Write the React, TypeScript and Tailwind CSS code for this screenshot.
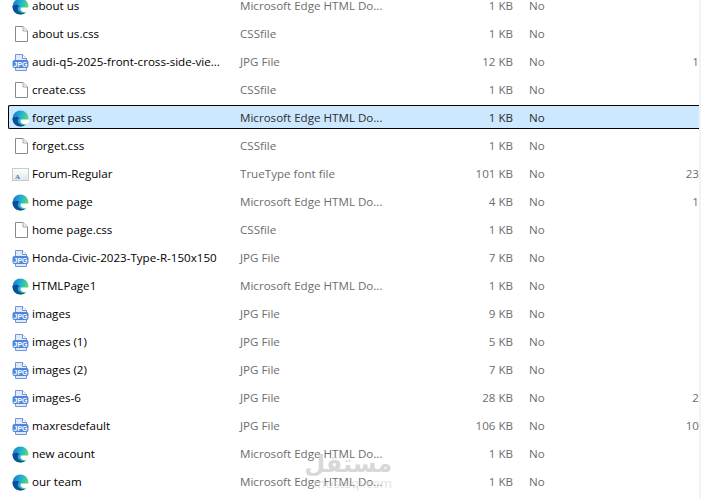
import React from 'react';

type FileKind = 'edge' | 'css' | 'jpg' | 'font';

type FileRow = {
  name: string;
  kind: FileKind;
  type: string;
  size: string;
  extra?: string;
  selected?: boolean;
};

const EDGE_DOC = 'Microsoft Edge HTML Do...';

const files: FileRow[] = [
  { name: 'about us', kind: 'edge', type: EDGE_DOC, size: '1 KB' },
  { name: 'about us.css', kind: 'css', type: 'CSSfile', size: '1 KB' },
  { name: 'audi-q5-2025-front-cross-side-vie...', kind: 'jpg', type: 'JPG File', size: '12 KB', extra: '1' },
  { name: 'create.css', kind: 'css', type: 'CSSfile', size: '1 KB' },
  { name: 'forget pass', kind: 'edge', type: EDGE_DOC, size: '1 KB', selected: true },
  { name: 'forget.css', kind: 'css', type: 'CSSfile', size: '1 KB' },
  { name: 'Forum-Regular', kind: 'font', type: 'TrueType font file', size: '101 KB', extra: '23' },
  { name: 'home page', kind: 'edge', type: EDGE_DOC, size: '4 KB', extra: '1' },
  { name: 'home page.css', kind: 'css', type: 'CSSfile', size: '1 KB' },
  { name: 'Honda-Civic-2023-Type-R-150x150', kind: 'jpg', type: 'JPG File', size: '7 KB' },
  { name: 'HTMLPage1', kind: 'edge', type: EDGE_DOC, size: '1 KB' },
  { name: 'images', kind: 'jpg', type: 'JPG File', size: '9 KB' },
  { name: 'images (1)', kind: 'jpg', type: 'JPG File', size: '5 KB' },
  { name: 'images (2)', kind: 'jpg', type: 'JPG File', size: '7 KB' },
  { name: 'images-6', kind: 'jpg', type: 'JPG File', size: '28 KB', extra: '2' },
  { name: 'maxresdefault', kind: 'jpg', type: 'JPG File', size: '106 KB', extra: '10' },
  { name: 'new acount', kind: 'edge', type: EDGE_DOC, size: '1 KB' },
  { name: 'our team', kind: 'edge', type: EDGE_DOC, size: '1 KB' },
];

const EdgeIcon = () => (
  <svg width="17" height="17" viewBox="0 0 17 17">
    <defs>
      <linearGradient id="edgeTop" x1="0" y1="0.2" x2="1" y2="0.5">
        <stop offset="0" stopColor="#1478c8" />
        <stop offset="0.5" stopColor="#22b0d8" />
        <stop offset="1" stopColor="#62de62" />
      </linearGradient>
    </defs>
    <circle cx="8.5" cy="8.5" r="8" fill="url(#edgeTop)" />
    <path d="M.5 8.500C.5 13 4 16.500 8.500 16.500c2 0 3.600-.6 5-1.700-3 .8-6.500-.3-7.500-3-.6-1.700.2-3.300 1.500-4C4.500 6 1.500 7 .5 8.500z" fill="#0d4f96" />
    <path d="M17 9.600H10c-1 0-1.500.7-1.500 1.400 0 1.800 2.500 3.200 4.500 3.200.7 0 1.300-.1 1.900-.4L17 12z" fill="#ffffff" />
  </svg>
);

const CssIcon = () => (
  <svg width="16" height="16" viewBox="0 0 16 16">
    <path d="M2.500 .5H10L14.500 5V15.500H2.500Z" fill="#ffffff" stroke="#8a8a8a" />
    <path d="M10 .5V5H14.500" fill="#f1f1f1" stroke="#a8a8a8" />
  </svg>
);

const JpgIcon = () => (
  <svg width="17" height="17" viewBox="0 0 17 17">
    <path d="M3.500 .5H10.500L14.500 4.500V16.500H3.500Z" fill="#dfe9fa" stroke="#6d96dc" />
    <path d="M10.500 .5V4.500H14.500" fill="#ffffff" stroke="#6d96dc" />
    <rect x="0.500" y="6" width="16" height="8" rx="2" fill="#4f86dc" />
    <text x="8.500" y="12.500" textAnchor="middle" fontSize="7" fontWeight="700" fill="#ffffff" fontFamily="'Liberation Sans', sans-serif">JPG</text>
  </svg>
);

const FontIcon = () => (
  <svg width="17" height="13" viewBox="0 0 17 13">
    <defs>
      <linearGradient id="fontBg" x1="0" y1="0" x2="0" y2="1">
        <stop offset="0" stopColor="#ffffff" />
        <stop offset="1" stopColor="#dfe6e8" />
      </linearGradient>
    </defs>
    <rect x="0.500" y="0.500" width="16" height="12" fill="url(#fontBg)" stroke="#c4cec6" />
    <text x="5.500" y="10.500" textAnchor="middle" fontSize="7" fontWeight="700" fill="#4a6fb8" fontFamily="'Liberation Serif', serif">A</text>
  </svg>
);

const icons: Record<FileKind, React.FC> = {
  edge: EdgeIcon,
  css: CssIcon,
  jpg: JpgIcon,
  font: FontIcon,
};

const Row: React.FC<{ file: FileRow }> = ({ file }) => {
  const Icon = icons[file.kind];
  const muted = file.selected ? 'text-[#2c2c2c]' : 'text-[#6d6d6d]';
  return (
    <div
      className={`flex h-[24px] items-center border-y border-l pt-[2px] ${file.selected ? 'rounded-l-[2px] border-black bg-[#cce8ff]' : 'border-transparent'}`}
    >
      <div className="flex w-[23px] shrink-0 justify-center">
        <Icon />
      </div>
      <span className="w-[208px] shrink-0 truncate leading-[16px] text-black">{file.name}</span>
      <span className={`w-[150px] shrink-0 leading-[16px] ${muted}`}>{file.type}</span>
      <span className={`w-[123px] shrink-0 text-right leading-[16px] ${muted}`}>{file.size}</span>
      <span className={`ml-[16px] w-[30px] shrink-0 leading-[16px] ${muted}`}>No</span>
      <span className="flex-1 text-right leading-[16px] text-[#6d6d6d]">{file.extra}</span>
    </div>
  );
};

export default function App() {
  return (
    <div className="relative h-[499px] w-[701px] overflow-hidden bg-white font-['Open_Sans','Liberation_Sans',sans-serif] text-[11.6px]">
      <div className="-mt-[7px] flex w-[699px] flex-col gap-[4px] pl-[8px]">
        {files.map((file) => (
          <Row key={file.name} file={file} />
        ))}
      </div>
      <div className="absolute right-0 top-0 h-full w-[2px] bg-[#f3f3f3]" />
      <div className="pointer-events-none absolute right-[309px] top-[452px] flex flex-col items-end text-[#c8c8c8] opacity-70">
        <span className="font-['DejaVu_Sans',sans-serif] text-[24px] font-bold leading-[24px]">مستقل</span>
        <span className="text-[13px] leading-[14px] text-[#d8d8d8]">mostaql.com</span>
      </div>
    </div>
  );
}
